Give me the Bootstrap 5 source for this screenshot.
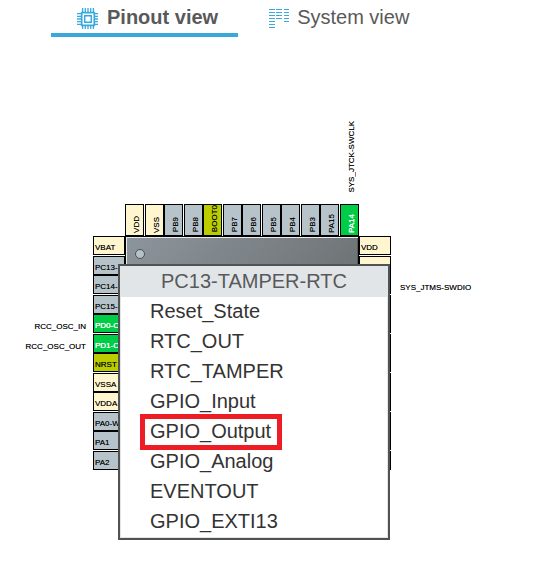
<!DOCTYPE html>
<html lang="en">
<head>
<meta charset="utf-8">
<meta name="viewport" content="width=device-width, initial-scale=1">
<title>Pinout view</title>
<link href="https://cdn.jsdelivr.net/npm/bootstrap@5.3.0/dist/css/bootstrap.min.css" rel="stylesheet">
<style>
  body { font-family: "Liberation Sans", Arial, sans-serif; background: #fff; color: #000; }
  .view-tabs { padding-left: 51px; }
  .view-tab { height: 37px; padding: 1px 0 0; font-size: 20px; line-height: 24px; color: #58595b; background: none; border: 0; border-bottom: 4px solid transparent; }
  .view-tab svg { margin-top: 3px; }
  .view-tab.active { font-weight: 700; border-color: #39a9dc; padding-left: 26px; padding-right: 20px; }
  .view-tab:not(.active) { margin-left: 30px; }
  .board { --pin: 19px; margin-top: 84px; padding: 0 0 96px 20px; font-size: 8px; line-height: 10px; text-shadow: 0 0 0 rgba(0, 0, 0, .6); }
  .pins-top { padding-left: 105px; }
  .pins-top li { width: var(--pin); }
  .pins-top li:nth-child(odd) { margin-right: 1px; }
  .pins-top .pin { display: flex; align-items: flex-end; height: 32px; width: var(--pin); padding: 0 0 2px 6px; }
  .pins-top .pin span, .pins-top .signal { writing-mode: vertical-rl; transform: rotate(180deg); }
  .pins-top .signal { margin: 0 3px 11px 7px; }
  .pins-side li { height: var(--pin); }
  .pins-side li:nth-child(odd) { margin-bottom: 1px; }
  .pins-side .pin { width: 32px; height: var(--pin); padding: 6px 0 0 1px; }
  .pins-side .signal { width: 73px; padding: 8px 7px 0 0; }
  .pins-side.pins-right .signal { width: auto; padding: 8px 0 0 9px; }
  .pin { background: #b7c3ca; border: 1px solid #000; overflow: hidden; white-space: nowrap; flex: none; }
  .signal { white-space: nowrap; }
  .pin-power { background: #fff5cf; }
  .pin-boot { background: #bbcc00; }
  .pin-used { background: #00cd46; color: #fff; text-shadow: 0 0 0 #fff; }
  .chip-body { width: 234px; background: linear-gradient(135deg, #8d959c, #6c7173 60%, #606466); border: 1px solid #000; box-shadow: inset 1px 1px #e8eaec, inset -1px -1px #55595b; padding: 11px 0 0 8px; }
  .pin-menu { left: 118px; top: 143px; width: 272px; background: #fff; border: 2px solid #505352; box-shadow: inset 0 0 0 1px #e1e5e8; font-size: 20px; text-shadow: none; padding-bottom: 1px; }
  .pin-menu-title { background: #e1e5e8; color: #58595b; height: 31px; line-height: 31px; }
  .pin-menu-item { height: 30px; padding: 2px 0 2px 25px; background: none; border: 0; color: #333; line-height: 24px; text-align: left; }
  .pin-menu-item span { display: inline-block; padding: 0 6px 0 5px; height: 26px; vertical-align: top; }
  .pin-menu-item.chosen span { outline: 5px solid #ee1c25; }
</style>
</head>
<body>
<nav class="view-tabs d-flex" aria-label="Views">
  <button type="button" class="view-tab active d-flex align-items-center gap-2">
    <svg width="22" height="22" viewBox="0 0 22 22" fill="none" stroke="#39a9dc" aria-hidden="true"><path stroke-width="1.300" d="M5.600 0v4M8.300 0v4M11 0v4M13.700 0v4M16.400 0v4M5.600 18v3M8.300 18v3M11 18v3M13.700 18v3M16.400 18v3M0 5.600h4M0 8.300h4M0 11h4M0 13.700h4M0 16.400h4M18 5.600h3M18 8.300h3M18 11h3M18 13.700h3M18 16.400h3"/><path d="M4.700 4.700h12.600v12.600h-12.600z" stroke-width="1.700"/><path d="M7.700 7.700h6.600v6.600h-6.600z" stroke-width="1.500"/></svg>
    Pinout view</button>
  <button type="button" class="view-tab d-flex align-items-center gap-2">
    <svg width="21" height="20" viewBox="0 0 21 20" fill="none" stroke="#39a9dc" aria-hidden="true"><path d="M1 .500h6M1 3.500h6M1 6.500h6M1 9.500h6M1 12.500h6M1 15.500h6M1 18.500h6M8 .500h6M8 3.500h6M8 6.500h6M8 9.500h6M16 .500h5M16 3.500h5M16 6.500h5M16 9.500h5M16 12.500h5"/></svg>
    System view</button>
</nav>
<main class="board position-relative">
  <ul class="pins-top list-unstyled d-flex align-items-end m-0">
    <li><div class="pin pin-power"><span>VDD</span></div></li>
    <li><div class="pin pin-power"><span>VSS</span></div></li>
    <li><div class="pin"><span>PB9</span></div></li>
    <li><div class="pin"><span>PB8</span></div></li>
    <li><div class="pin pin-boot"><span>BOOT0</span></div></li>
    <li><div class="pin"><span>PB7</span></div></li>
    <li><div class="pin"><span>PB6</span></div></li>
    <li><div class="pin"><span>PB5</span></div></li>
    <li><div class="pin"><span>PB4</span></div></li>
    <li><div class="pin"><span>PB3</span></div></li>
    <li><div class="pin"><span>PA15</span></div></li>
    <li><div class="signal">SYS_JTCK-SWCLK</div><div class="pin pin-used"><span>PA14</span></div></li>
  </ul>
  <div class="d-flex">
    <ul class="pins-side list-unstyled m-0">
      <li class="d-flex"><div class="signal"></div><div class="pin pin-power">VBAT</div></li>
      <li class="d-flex"><div class="signal"></div><div class="pin">PC13-</div></li>
      <li class="d-flex"><div class="signal"></div><div class="pin">PC14-</div></li>
      <li class="d-flex"><div class="signal"></div><div class="pin">PC15-</div></li>
      <li class="d-flex"><div class="signal text-end">RCC_OSC_IN</div><div class="pin pin-used">PD0-O</div></li>
      <li class="d-flex"><div class="signal text-end">RCC_OSC_OUT</div><div class="pin pin-used">PD1-O</div></li>
      <li class="d-flex"><div class="signal"></div><div class="pin pin-boot">NRST</div></li>
      <li class="d-flex"><div class="signal"></div><div class="pin pin-power">VSSA</div></li>
      <li class="d-flex"><div class="signal"></div><div class="pin pin-power">VDDA</div></li>
      <li class="d-flex"><div class="signal"></div><div class="pin">PA0-W</div></li>
      <li class="d-flex"><div class="signal"></div><div class="pin">PA1</div></li>
      <li class="d-flex"><div class="signal"></div><div class="pin">PA2</div></li>
    </ul>
    <div class="chip-body">
      <svg class="d-block" width="12" height="12" viewBox="0 0 12 12" aria-hidden="true"><circle cx="6" cy="6" r="4.500" fill="#b4c3c9" stroke="#4b4f52"/></svg>
    </div>
    <ul class="pins-side pins-right list-unstyled m-0">
      <li class="d-flex"><div class="pin pin-power">VDD</div></li>
      <li class="d-flex"><div class="pin pin-power"></div></li>
      <li class="d-flex"><div class="pin"></div><div class="signal">SYS_JTMS-SWDIO</div></li>
      <li class="d-flex"><div class="pin"></div></li>
      <li class="d-flex"><div class="pin"></div></li>
      <li class="d-flex"><div class="pin"></div></li>
      <li class="d-flex"><div class="pin"></div></li>
      <li class="d-flex"><div class="pin"></div></li>
      <li class="d-flex"><div class="pin"></div></li>
      <li class="d-flex"><div class="pin"></div></li>
      <li class="d-flex"><div class="pin"></div></li>
      <li class="d-flex"><div class="pin"></div></li>
    </ul>
  </div>
  <div class="pin-menu position-absolute d-flex flex-column">
    <div class="pin-menu-title text-center">PC13-TAMPER-RTC</div>
    <button type="button" class="pin-menu-item"><span>Reset_State</span></button>
    <button type="button" class="pin-menu-item"><span>RTC_OUT</span></button>
    <button type="button" class="pin-menu-item"><span>RTC_TAMPER</span></button>
    <button type="button" class="pin-menu-item"><span>GPIO_Input</span></button>
    <button type="button" class="pin-menu-item chosen"><span>GPIO_Output</span></button>
    <button type="button" class="pin-menu-item"><span>GPIO_Analog</span></button>
    <button type="button" class="pin-menu-item"><span>EVENTOUT</span></button>
    <button type="button" class="pin-menu-item"><span>GPIO_EXTI13</span></button>
  </div>
</main>
<script src="https://cdn.jsdelivr.net/npm/bootstrap@5.3.0/dist/js/bootstrap.bundle.min.js"></script>
</body>
</html>
